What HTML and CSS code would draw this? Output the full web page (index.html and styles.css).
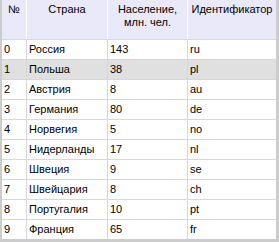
FILE: index.html
```html
<!DOCTYPE html>
<html lang="ru">
<head>
<meta charset="utf-8">
<link rel="stylesheet" href="styles.css">
</head>
<body>
<div class="grid">
  <table class="tbl">
    <colgroup>
      <col class="c0"><col class="c1"><col class="c2"><col class="c3">
    </colgroup>
    <thead>
      <tr>
        <th>№</th>
        <th>Страна</th>
        <th>Население,<br>млн. чел.</th>
        <th class="last">Идентификатор</th>
      </tr>
    </thead>
    <tbody>
      <tr><td>0</td><td>Россия</td><td>143</td><td class="last">ru</td></tr>
      <tr class="sel"><td>1</td><td>Польша</td><td>38</td><td class="last">pl</td></tr>
      <tr><td>2</td><td>Австрия</td><td>8</td><td class="last">au</td></tr>
      <tr><td>3</td><td>Германия</td><td>80</td><td class="last">de</td></tr>
      <tr><td>4</td><td>Норвегия</td><td>5</td><td class="last">no</td></tr>
      <tr><td>5</td><td>Нидерланды</td><td>17</td><td class="last">nl</td></tr>
      <tr><td>6</td><td>Швеция</td><td>9</td><td class="last">se</td></tr>
      <tr><td>7</td><td>Швейцария</td><td>8</td><td class="last">ch</td></tr>
      <tr><td>8</td><td>Португалия</td><td>10</td><td class="last">pt</td></tr>
      <tr><td>9</td><td>Франция</td><td>65</td><td class="last">fr</td></tr>
    </tbody>
  </table>
</div>
</body>
</html>
```
FILE: styles.css
```css
html, body {
  margin: 0;
  padding: 0;
  background: #ffffff;
}
.grid {
  width: 279px;
  height: 242px;
  box-sizing: border-box;
  border-left: 2px solid #cccccc;
  border-right: 3px solid #cccccc;
  border-bottom: 3px solid #cccccc;
  background: #ffffff;
  overflow: hidden;
}
.tbl {
  width: 274px;
  border-collapse: separate;
  border-spacing: 0;
  table-layout: fixed;
  font-family: "Liberation Sans", Arial, sans-serif;
  font-size: 11px;
  color: #000000;
}
.c0 { width: 25px; }
.c1 { width: 81px; }
.c2 { width: 80px; }
.c3 { width: 88px; }
th {
  height: 39px;
  box-sizing: border-box;
  padding: 3px 2px 0 2px;
  vertical-align: top;
  text-align: center;
  font-weight: normal;
  line-height: 13px;
  background: #e9e9f9;
  border-right: 1px solid #ffffff;
}
td {
  height: 20px;
  box-sizing: border-box;
  padding: 0 2px;
  text-align: left;
  vertical-align: middle;
  line-height: 19px;
  white-space: nowrap;
  overflow: hidden;
  border-top: 1px solid #d8d8d8;
  border-right: 1px solid #d8d8d8;
}
th.last, td.last {
  border-right: none;
}
.sel td {
  background: #e0e0e0;
}
```
